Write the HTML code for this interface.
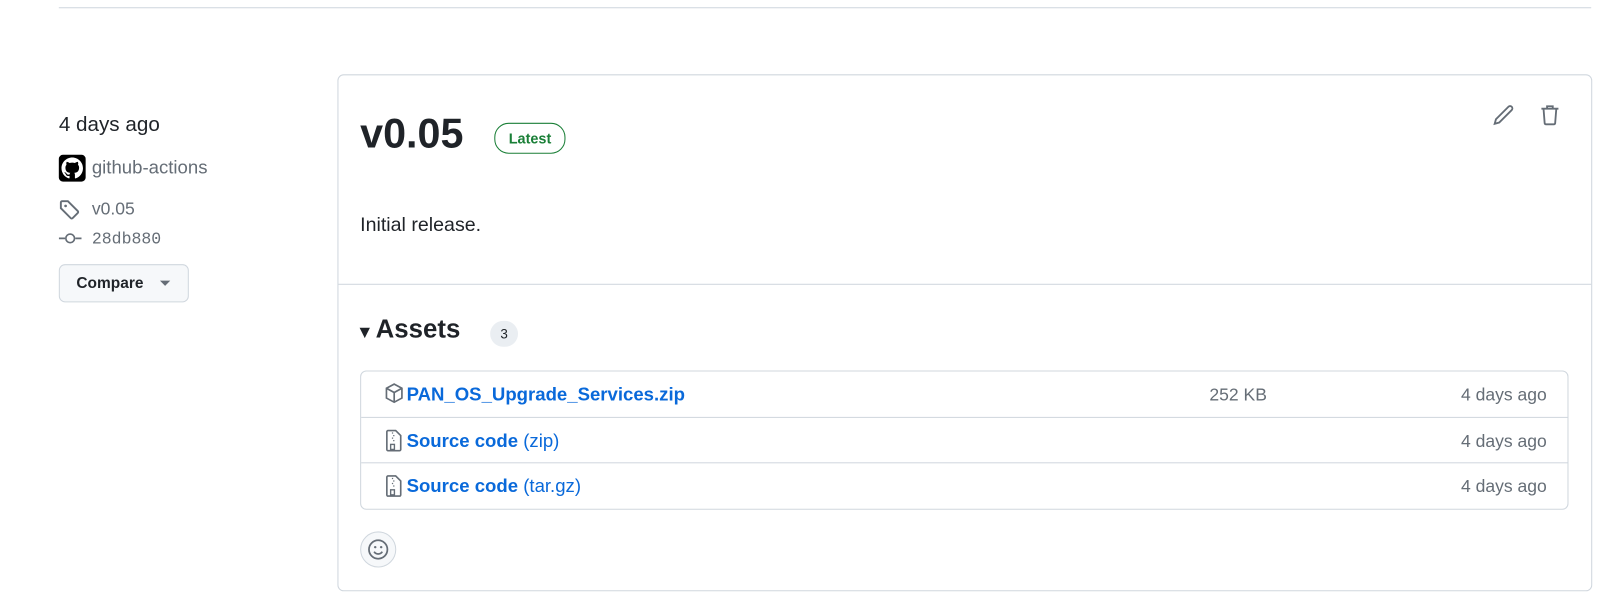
<!DOCTYPE html>
<html><head><style>
body{margin:0;width:1618px;height:598px;background:#fff;font-family:"Liberation Sans",sans-serif;color:#1f2328;position:relative;overflow:hidden}
#w{position:absolute;left:0;top:0;width:1568px;height:580px;transform:scale(1.0319);transform-origin:0 0}
.a{position:absolute}
.line{left:57px;top:7px;width:1485px;height:1px;background:#d0d7de}
.muted{color:#656d76}
.card{left:327px;top:72px;width:1214px;height:499px;border:1px solid #d0d7de;border-radius:6px}
.blue{color:#0969da}
.row{position:absolute;left:0;width:1170px;height:43px;border-top:1px solid #d0d7de}
.row:first-child{border-top:none}
</style></head><body><div id="w">
<div class="a line"></div>
<div class="a" style="left:57px;top:110px;font-size:20px">4 days ago</div>
<div class="a" style="left:57px;top:150px;width:26px;height:26px;background:#000;border-radius:4px">
<svg width="26" height="26" viewBox="0 0 16 16"><path fill="#fff" transform="translate(1.6,1.6) scale(0.8)" d="M8 0C3.58 0 0 3.58 0 8c0 3.54 2.29 6.53 5.47 7.59.4.07.55-.17.55-.38 0-.19-.01-.82-.01-1.49-2.01.37-2.53-.49-2.69-.94-.09-.23-.48-.94-.82-1.13-.28-.15-.68-.52-.01-.53.63-.01 1.08.58 1.23.82.72 1.21 1.87.87 2.33.66.07-.52.28-.87.51-1.07-1.78-.2-3.64-.89-3.64-3.95 0-.87.31-1.59.82-2.15-.08-.2-.36-1.02.08-2.12 0 0 .67-.21 2.2.82.64-.18 1.32-.27 2-.27.68 0 1.36.09 2 .27 1.53-1.04 2.2-.82 2.2-.82.44 1.1.16 1.92.08 2.12.51.56.82 1.27.82 2.15 0 3.07-1.87 3.75-3.65 3.95.29.25.54.73.54 1.48 0 1.07-.01 1.93-.01 2.2 0 .21.15.46.55.38A8.01 8.01 0 0016 8c0-4.42-3.58-8-8-8z"/></svg></div>
<div class="a muted" style="left:89px;top:152px;font-size:18px">github-actions</div>
<svg class="a" style="left:57px;top:193px" width="21" height="21" viewBox="0 0 16 16"><path fill="none" stroke="#656d76" stroke-width="1.4" d="M1.5 2.5v4.2l7.3 7.3a1 1 0 001.4 0l3.8-3.8a1 1 0 000-1.4L6.7 1.5H2.5a1 1 0 00-1 1z"/><circle cx="5" cy="5" r="1" fill="#656d76"/></svg>
<div class="a muted" style="left:89px;top:193px;font-size:17px">v0.05</div>
<svg class="a" style="left:57px;top:223px" width="22" height="16" viewBox="0 0 22 16"><path stroke="#656d76" stroke-width="1.6" fill="none" d="M0 8h6M16 8h6"/><circle cx="11" cy="8" r="4.2" stroke="#656d76" stroke-width="1.6" fill="none"/></svg>
<div class="a muted" style="left:89px;top:223px;font-size:16px;font-family:'Liberation Mono',monospace">28db880</div>
<div class="a" style="left:57px;top:256px;width:124px;height:35px;border:1px solid #d0d7de;border-radius:6px;background:#f6f8fa"><span class="a" style="left:16px;top:9px;font-size:15px;font-weight:bold">Compare</span><span class="a" style="left:97px;top:15px;border:5px solid transparent;border-top-color:#656d76"></span></div>

<div class="a card">
<div class="a" style="left:21px;top:35px;font-size:40px;font-weight:bold">v0.05</div>
<div class="a" style="left:151px;top:46px;height:28px;padding:0 13px;border:1px solid #1a7f37;border-radius:14px;color:#1a7f37;font-size:14px;line-height:28px;font-weight:bold">Latest</div>
<svg class="a" style="left:1118px;top:28px" width="22" height="22" viewBox="0 0 16 16"><path fill="none" stroke="#656d76" stroke-width="1.3" d="M11.5 1.8a1.6 1.6 0 012.3 2.3L5 12.9l-3.2.9.9-3.2z"/></svg>
<svg class="a" style="left:1163px;top:27px" width="22" height="23" viewBox="0 0 16 16"><path fill="none" stroke="#656d76" stroke-width="1.3" d="M2 3.5h12M6 3.5V1.8h4v1.7M3.5 3.5l.8 10.2a1 1 0 001 .8h5.4a1 1 0 001-.8l.8-10.2"/></svg>
<div class="a" style="left:21px;top:135px;font-size:19px">Initial release.</div>
<div class="a" style="left:0;top:202px;width:1214px;height:1px;background:#d0d7de"></div>
<div class="a" style="left:21px;top:232px;font-size:25px;font-weight:bold"><span style="font-size:18px">▾</span> Assets</div>
<div class="a" style="left:147px;top:238px;width:27px;height:25px;border-radius:13px;background:#eaeef2;font-size:13px;text-align:center;line-height:25px">3</div>
<div class="a" style="left:21px;top:286px;width:1169px;height:133px;border:1px solid #d0d7de;border-radius:6px">
<div class="row" style="top:0">
<svg class="a" style="left:22px;top:11px" width="20" height="20" viewBox="0 0 16 16"><path fill="none" stroke="#656d76" stroke-width="1.3" d="M8 1l6 3.2v7.6L8 15l-6-3.2V4.2zM2 4.2L8 7.5l6-3.3M8 7.5V15"/></svg>
<span class="a blue" style="left:44px;top:12px;font-size:18px;font-weight:bold">PAN_OS_Upgrade_Services.zip</span>
<span class="a muted" style="left:822px;top:13px;font-size:17px">252 KB</span>
<span class="a muted" style="right:21px;top:13px;font-size:17px">4 days ago</span></div>
<div class="row" style="top:44px">
<svg class="a" style="left:22px;top:11px" width="18" height="22" viewBox="0 0 14 18"><path fill="none" stroke="#656d76" stroke-width="1.3" d="M3 1h6l4 4v11a1 1 0 01-1 1H3M3 1a1 1 0 00-1 1v14a1 1 0 001 1"/><rect x="5" y="12" width="3" height="4" fill="none" stroke="#656d76" stroke-width="1.1"/><path stroke="#656d76" d="M6 3h1M7 5h1M6 7h1M7 9h1"/></svg>
<span class="a blue" style="left:44px;top:12px;font-size:18px"><b>Source code</b> (zip)</span>
<span class="a muted" style="right:21px;top:13px;font-size:17px">4 days ago</span></div>
<div class="row" style="top:88px">
<svg class="a" style="left:22px;top:11px" width="18" height="22" viewBox="0 0 14 18"><path fill="none" stroke="#656d76" stroke-width="1.3" d="M3 1h6l4 4v11a1 1 0 01-1 1H3M3 1a1 1 0 00-1 1v14a1 1 0 001 1"/><rect x="5" y="12" width="3" height="4" fill="none" stroke="#656d76" stroke-width="1.1"/><path stroke="#656d76" d="M6 3h1M7 5h1M6 7h1M7 9h1"/></svg>
<span class="a blue" style="left:44px;top:12px;font-size:18px"><b>Source code</b> (tar.gz)</span>
<span class="a muted" style="right:21px;top:13px;font-size:17px">4 days ago</span></div>
</div>
<div class="a" style="left:21px;top:442px;width:33px;height:33px;border:1px solid #d0d7de;border-radius:50%;background:#f6f8fa">
<svg class="a" style="left:6px;top:6px" width="21" height="21" viewBox="0 0 16 16"><circle cx="8" cy="8" r="6.8" fill="none" stroke="#656d76" stroke-width="1.3"/><circle cx="5.8" cy="6.3" r=".9" fill="#656d76"/><circle cx="10.2" cy="6.3" r=".9" fill="#656d76"/><path d="M5 9.6a3.5 3.5 0 006 0" fill="none" stroke="#656d76" stroke-width="1.3"/></svg></div>
</div>
</div></body></html>
